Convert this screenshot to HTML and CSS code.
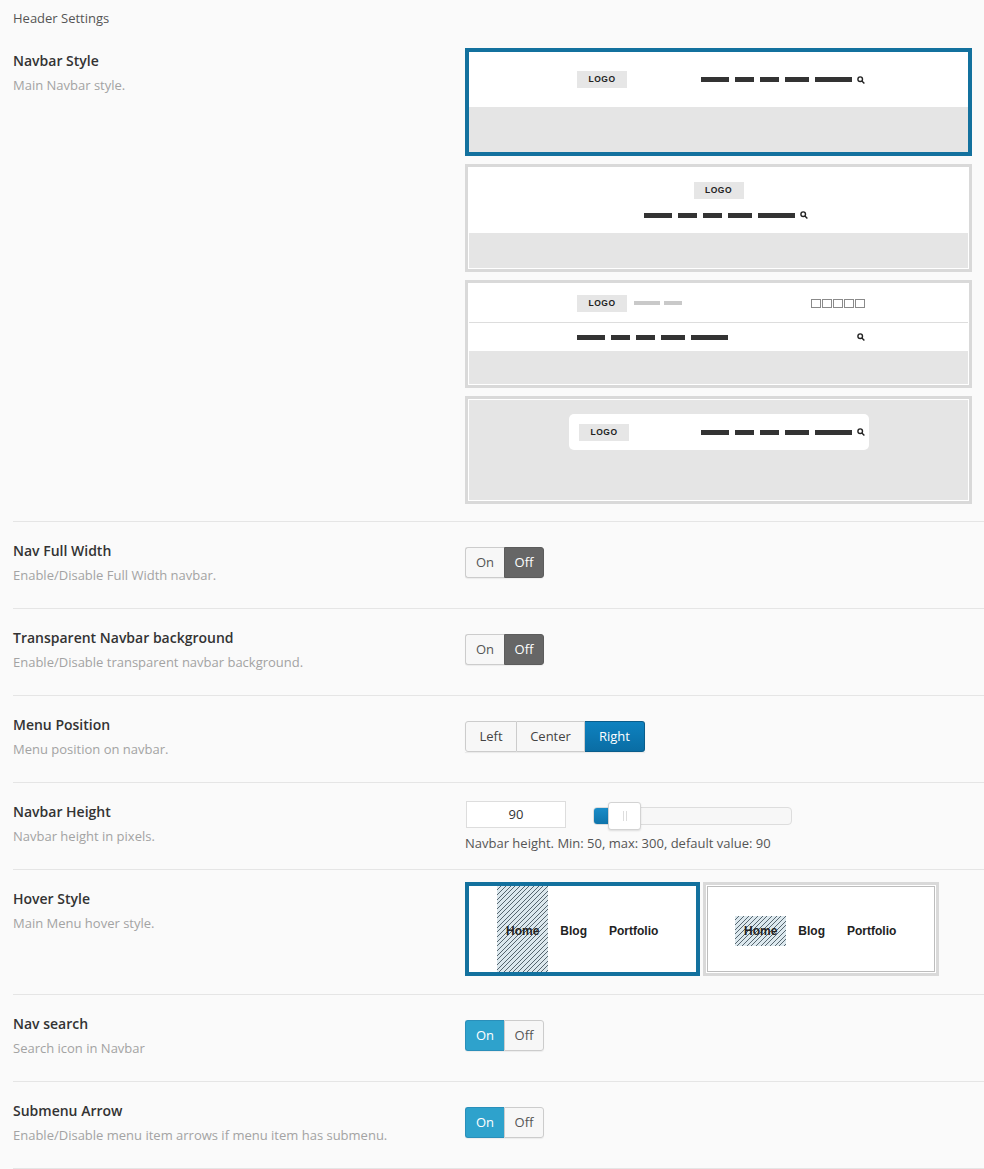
FILE: index.html
```html
<!DOCTYPE html>
<html lang="en">
<head>
<meta charset="UTF-8">
<meta name="viewport" content="width=device-width,initial-scale=1">
<title>Header Settings</title>
<link rel="stylesheet" href="styles.css">
</head>
<body>

<div class="page">
  <div class="section-title">Header Settings</div>

  <!-- Navbar style -->
  <div class="row">
    <div class="label"><h3>Navbar Style</h3><p>Main Navbar style.</p></div>
    <div class="control styles">
      <div class="opt sel">
        <div class="shot s1">
          <div class="bar">
            <div class="wrap">
              <span class="logo">LOGO</span>
              <span class="menu"><i class="w28"></i><i class="w19"></i><i class="w19"></i><i class="w24"></i><i class="w37"></i><svg class="search" viewBox="0 0 8 8"><circle cx="3.2" cy="3.2" r="2.3"/><path d="M4.9 4.9L7.4 7.4"/></svg></span>
            </div>
          </div>
        </div>
      </div>
      <div class="opt">
        <div class="shot s2">
          <div class="bar">
            <span class="logo">LOGO</span>
            <span class="menu"><i class="w28"></i><i class="w19"></i><i class="w19"></i><i class="w24"></i><i class="w37"></i><svg class="search" viewBox="0 0 8 8"><circle cx="3.2" cy="3.2" r="2.3"/><path d="M4.9 4.9L7.4 7.4"/></svg></span>
          </div>
        </div>
      </div>
      <div class="opt">
        <div class="shot s3">
          <div class="top">
            <div class="wrap">
              <span class="brand"><span class="logo">LOGO</span><b class="w26"></b><b class="w18"></b></span>
              <span class="squares"><u></u><u></u><u></u><u></u><u></u></span>
            </div>
          </div>
          <div class="bottom">
            <div class="wrap">
              <span class="menu"><i class="w28"></i><i class="w19"></i><i class="w19"></i><i class="w24"></i><i class="w37"></i></span>
              <svg class="search" viewBox="0 0 8 8"><circle cx="3.2" cy="3.2" r="2.3"/><path d="M4.9 4.9L7.4 7.4"/></svg>
            </div>
          </div>
        </div>
      </div>
      <div class="opt">
        <div class="shot s4">
          <div class="float">
            <span class="logo">LOGO</span>
            <span class="menu"><i class="w28"></i><i class="w19"></i><i class="w19"></i><i class="w24"></i><i class="w37"></i><svg class="search" viewBox="0 0 8 8"><circle cx="3.2" cy="3.2" r="2.3"/><path d="M4.9 4.9L7.4 7.4"/></svg></span>
          </div>
        </div>
      </div>
    </div>
  </div>

  <div class="row">
    <div class="label"><h3>Nav Full Width</h3><p>Enable/Disable Full Width navbar.</p></div>
    <div class="control">
      <div class="toggle"><span>On</span><span class="off-active">Off</span></div>
    </div>
  </div>

  <div class="row">
    <div class="label"><h3>Transparent Navbar background</h3><p>Enable/Disable transparent navbar background.</p></div>
    <div class="control">
      <div class="toggle"><span>On</span><span class="off-active">Off</span></div>
    </div>
  </div>

  <div class="row">
    <div class="label"><h3>Menu Position</h3><p>Menu position on navbar.</p></div>
    <div class="control">
      <div class="btn-group">
        <span class="b-left">Left</span><span class="b-center">Center</span><span class="b-right active">Right</span>
      </div>
    </div>
  </div>

  <div class="row">
    <div class="label"><h3>Navbar Height</h3><p>Navbar height in pixels.</p></div>
    <div class="control height">
      <div class="range-line">
        <div class="num">90</div>
        <div class="track">
          <div class="fill"></div>
          <div class="handle"><i></i><i></i></div>
        </div>
      </div>
      <div class="help">Navbar height. Min: 50, max: 300, default value: 90</div>
    </div>
  </div>

  <div class="row">
    <div class="label"><h3>Hover Style</h3><p>Main Menu hover style.</p></div>
    <div class="control hovers">
      <div class="hv sel">
        <div class="hv-inner full">
          <span class="item hatch">Home</span><span class="item">Blog</span><span class="item">Portfolio</span>
        </div>
      </div>
      <div class="hv">
        <div class="hv-inner boxed">
          <span class="item hatch">Home</span><span class="item">Blog</span><span class="item">Portfolio</span>
        </div>
      </div>
    </div>
  </div>

  <div class="row">
    <div class="label"><h3>Nav search</h3><p>Search icon in Navbar</p></div>
    <div class="control">
      <div class="toggle"><span class="on-active">On</span><span>Off</span></div>
    </div>
  </div>

  <div class="row">
    <div class="label"><h3>Submenu Arrow</h3><p>Enable/Disable menu item arrows if menu item has submenu.</p></div>
    <div class="control">
      <div class="toggle"><span class="on-active">On</span><span>Off</span></div>
    </div>
  </div>
</div>

</body>
</html>
```

FILE: styles.css
```css
*{box-sizing:border-box}
body{
  margin:0;background:#fafafa;color:#333;
  font-family:"Open Sans","Noto Sans",sans-serif;font-size:13px;
}
.page{padding-left:13px}
.section-title{padding:8px 0 4px;line-height:20px;color:#555;font-size:13px}

/* ---------- rows ---------- */
.row{display:flex;padding:19px 0 17px;border-bottom:1px solid #e5e5e5}
.label{width:452px;flex:none;padding-bottom:6px}
.label h3{margin:0;font-size:14px;font-weight:600;line-height:20px;color:#333}
.label p{margin:4px 0 0;font-size:13px;line-height:20px;color:#a3a3a3}
.control{margin-top:6px}

/* ---------- navbar style pictures ---------- */
.styles{margin-top:-3px;margin-bottom:0;display:flex;flex-direction:column;gap:8px}
.opt{width:507px;height:108px;border:3px solid #d9d9d9;padding:1px;background:#fff}
.opt.sel{border:4px solid #13719e;padding:0}
.shot{height:100%;background:#e5e5e5;display:flex;flex-direction:column}

.logo{
  display:inline-block;width:50px;height:17px;text-align:center;
  background:#e6e6e6;color:#222;font:bold 8.5px "Liberation Sans",sans-serif;line-height:17px;letter-spacing:.5px;
}
.menu{display:flex;align-items:center;gap:6px}
.menu i{display:block;height:5px;background:#333}
.w28{width:28px}.w19{width:19px}.w24{width:24px}.w37{width:37px}
.search{width:8px;height:8px;flex:none;fill:none;stroke:#222;stroke-width:1.4}
.menu .search{margin-left:-1px}

.wrap{margin-left:108px;width:288px;display:flex;justify-content:space-between;align-items:center}

.s1 .bar{height:55px;background:#fff;display:flex;align-items:center}

.s2 .bar{height:65px;background:#fff;display:flex;flex-direction:column;align-items:center;padding-top:14px;gap:12px}
.s2 .menu{margin-left:15px}

.s3 .top{height:39px;background:#fff;border-bottom:1px solid #ddd;display:flex;align-items:center}
.s3 .bottom{height:28px;background:#fff;display:flex;align-items:center}
.brand{display:flex;align-items:center;gap:4px}
.brand b{display:block;height:4px;background:#c9c9c9}
.brand .w26{width:26px;margin-left:3px}.brand .w18{width:18px}
.squares{display:flex;gap:1px}
.squares u{display:block;width:10px;height:9px;border:1px solid #8a8a8a}

.s4 .float{
  margin:14px 0 0 100px;width:300px;height:36px;background:#fff;border-radius:5px;
  display:flex;align-items:center;justify-content:space-between;padding:0 4px 0 10px;
}

/* ---------- toggles ---------- */
.toggle{display:inline-flex;height:31px;box-shadow:0 1px 1px rgba(0,0,0,.06);border-radius:3px}
.toggle span{
  width:39px;line-height:29px;text-align:center;border:1px solid #ccc;
  background:#f7f7f7;color:#555;font-size:13px;
}
.toggle span:first-child{border-radius:3px 0 0 3px;border-right:none}
.toggle span:last-child{width:40px;border-radius:0 3px 3px 0}
.toggle .off-active{background:#666;border-color:#5c5c5c;color:#fff}
.toggle .on-active{background:#2ea2cc;border-color:#2a8fba;color:#fff}

/* ---------- button group ---------- */
.btn-group{display:inline-flex;height:31px;box-shadow:0 1px 1px rgba(0,0,0,.06)}
.btn-group span{
  line-height:29px;text-align:center;border:1px solid #ccc;background:#f7f7f7;color:#444;font-size:13px;
}
.b-left{width:52px;border-radius:3px 0 0 3px}
.b-center{width:68px;border-left:none!important}
.b-right{width:60px;border-left:none!important;border-radius:0 3px 3px 0}
.btn-group .active{background:linear-gradient(#0e82c0,#0a6da4);border-color:#0a5d8b;color:#fff}

/* ---------- number + slider ---------- */
.height{margin-top:-1px}
.range-line{display:flex;align-items:center}
.num{
  width:100px;height:27px;margin-left:1px;border:1px solid #ddd;background:#fff;
  text-align:center;line-height:25px;font-size:13px;color:#333;
}
.track{
  position:relative;width:199px;height:18px;margin:3px 0 0 27px;
  background:#f7f7f7;border:1px solid #ddd;border-radius:4px;
}
.fill{width:20px;height:100%;background:linear-gradient(#1a8cc8,#0f74ab);border-radius:3px 0 0 3px}
.handle{
  position:absolute;left:14px;top:-6px;width:33px;height:28px;
  background:#fff;border:1px solid #d3d3d3;border-radius:3px;box-shadow:0 1px 2px rgba(0,0,0,.12);
  display:flex;justify-content:center;align-items:center;gap:2px;
}
.handle i{display:block;width:1px;height:10px;background:#ddd}
.help{margin-top:7px;line-height:16px;font-size:13px;color:#555}

/* ---------- hover style ---------- */
.hovers{margin-top:-7px;margin-bottom:1px;display:flex;gap:3px}
.hv{width:235px;height:94px;border:3px solid #d9d9d9;padding:1px;background:#fff}
.hv + .hv{width:236px}
.hv.sel{border:4px solid #13719e;padding:0}
.hv-inner{height:100%;display:flex;align-items:center;padding-left:28px;padding-top:3px;gap:3px;
  font:bold 12px "Liberation Sans",Arial,sans-serif;color:#222}
.hv-inner.boxed{border:1px solid #bdbdbd;padding-left:27px}
.item{padding:0 9px;line-height:30px}
.item + .item + .item{margin-left:1px}
.hatch{background:repeating-linear-gradient(135deg,#dce8ee 0 2.6px,#56656e 2.6px 3.3px)}
.full .hatch{align-self:stretch;display:flex;align-items:center;margin-top:-3px;padding-top:3px}
```
